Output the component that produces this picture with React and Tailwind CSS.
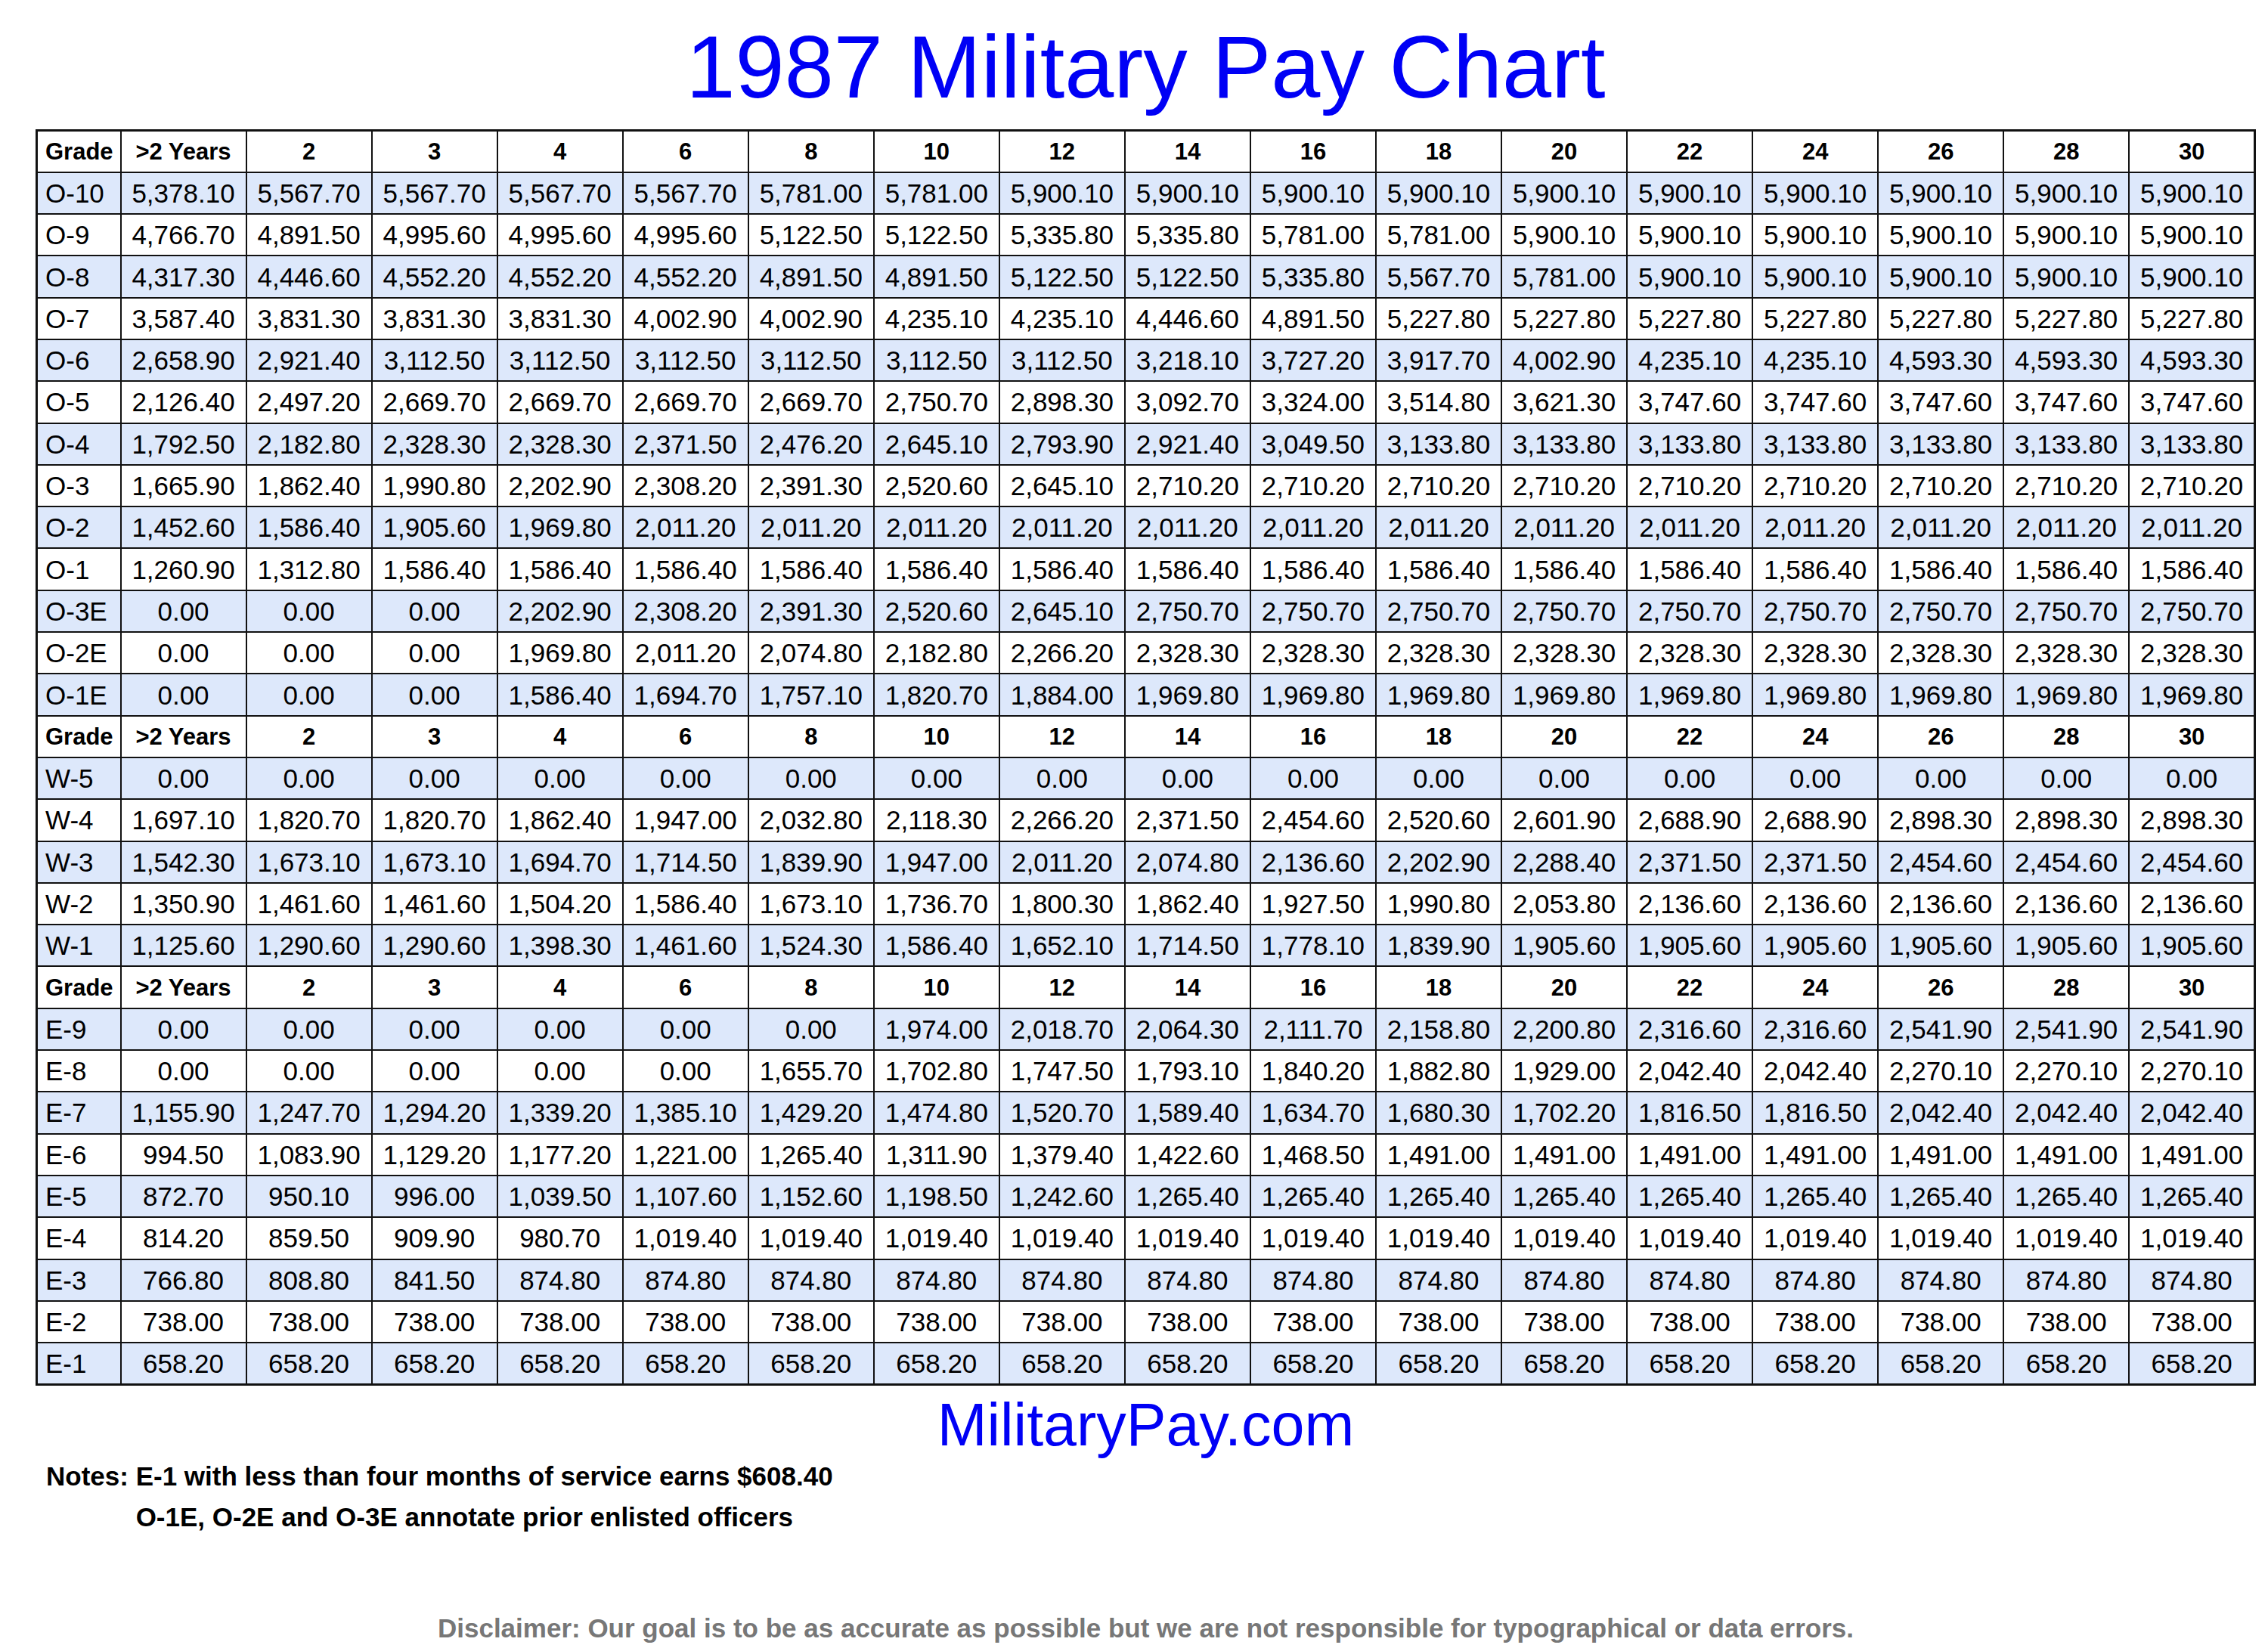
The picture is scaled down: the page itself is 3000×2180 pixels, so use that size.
const rep = (v, n) => Array(n).fill(v);

const years = [">2 Years", "2", "3", "4", "6", "8", "10", "12", "14", "16", "18", "20", "22", "24", "26", "28", "30"];

const officers = [
  ["O-10", ["5,378.10", "5,567.70", "5,567.70", "5,567.70", "5,567.70", "5,781.00", "5,781.00", ...rep("5,900.10", 10)]],
  ["O-9", ["4,766.70", "4,891.50", "4,995.60", "4,995.60", "4,995.60", "5,122.50", "5,122.50", "5,335.80", "5,335.80", "5,781.00", "5,781.00", ...rep("5,900.10", 6)]],
  ["O-8", ["4,317.30", "4,446.60", "4,552.20", "4,552.20", "4,552.20", "4,891.50", "4,891.50", "5,122.50", "5,122.50", "5,335.80", "5,567.70", "5,781.00", ...rep("5,900.10", 5)]],
  ["O-7", ["3,587.40", "3,831.30", "3,831.30", "3,831.30", "4,002.90", "4,002.90", "4,235.10", "4,235.10", "4,446.60", "4,891.50", ...rep("5,227.80", 7)]],
  ["O-6", ["2,658.90", "2,921.40", ...rep("3,112.50", 6), "3,218.10", "3,727.20", "3,917.70", "4,002.90", "4,235.10", "4,235.10", ...rep("4,593.30", 3)]],
  ["O-5", ["2,126.40", "2,497.20", ...rep("2,669.70", 4), "2,750.70", "2,898.30", "3,092.70", "3,324.00", "3,514.80", "3,621.30", ...rep("3,747.60", 5)]],
  ["O-4", ["1,792.50", "2,182.80", "2,328.30", "2,328.30", "2,371.50", "2,476.20", "2,645.10", "2,793.90", "2,921.40", "3,049.50", ...rep("3,133.80", 7)]],
  ["O-3", ["1,665.90", "1,862.40", "1,990.80", "2,202.90", "2,308.20", "2,391.30", "2,520.60", "2,645.10", ...rep("2,710.20", 9)]],
  ["O-2", ["1,452.60", "1,586.40", "1,905.60", "1,969.80", ...rep("2,011.20", 13)]],
  ["O-1", ["1,260.90", "1,312.80", ...rep("1,586.40", 15)]],
  ["O-3E", [...rep("0.00", 3), "2,202.90", "2,308.20", "2,391.30", "2,520.60", "2,645.10", ...rep("2,750.70", 9)]],
  ["O-2E", [...rep("0.00", 3), "1,969.80", "2,011.20", "2,074.80", "2,182.80", "2,266.20", ...rep("2,328.30", 9)]],
  ["O-1E", [...rep("0.00", 3), "1,586.40", "1,694.70", "1,757.10", "1,820.70", "1,884.00", ...rep("1,969.80", 9)]],
];

const warrants = [
  ["W-5", rep("0.00", 17)],
  ["W-4", ["1,697.10", "1,820.70", "1,820.70", "1,862.40", "1,947.00", "2,032.80", "2,118.30", "2,266.20", "2,371.50", "2,454.60", "2,520.60", "2,601.90", "2,688.90", "2,688.90", ...rep("2,898.30", 3)]],
  ["W-3", ["1,542.30", "1,673.10", "1,673.10", "1,694.70", "1,714.50", "1,839.90", "1,947.00", "2,011.20", "2,074.80", "2,136.60", "2,202.90", "2,288.40", "2,371.50", "2,371.50", ...rep("2,454.60", 3)]],
  ["W-2", ["1,350.90", "1,461.60", "1,461.60", "1,504.20", "1,586.40", "1,673.10", "1,736.70", "1,800.30", "1,862.40", "1,927.50", "1,990.80", "2,053.80", ...rep("2,136.60", 5)]],
  ["W-1", ["1,125.60", "1,290.60", "1,290.60", "1,398.30", "1,461.60", "1,524.30", "1,586.40", "1,652.10", "1,714.50", "1,778.10", "1,839.90", ...rep("1,905.60", 6)]],
];

const enlisted = [
  ["E-9", [...rep("0.00", 6), "1,974.00", "2,018.70", "2,064.30", "2,111.70", "2,158.80", "2,200.80", "2,316.60", "2,316.60", ...rep("2,541.90", 3)]],
  ["E-8", [...rep("0.00", 5), "1,655.70", "1,702.80", "1,747.50", "1,793.10", "1,840.20", "1,882.80", "1,929.00", "2,042.40", "2,042.40", ...rep("2,270.10", 3)]],
  ["E-7", ["1,155.90", "1,247.70", "1,294.20", "1,339.20", "1,385.10", "1,429.20", "1,474.80", "1,520.70", "1,589.40", "1,634.70", "1,680.30", "1,702.20", "1,816.50", "1,816.50", ...rep("2,042.40", 3)]],
  ["E-6", ["994.50", "1,083.90", "1,129.20", "1,177.20", "1,221.00", "1,265.40", "1,311.90", "1,379.40", "1,422.60", "1,468.50", ...rep("1,491.00", 7)]],
  ["E-5", ["872.70", "950.10", "996.00", "1,039.50", "1,107.60", "1,152.60", "1,198.50", "1,242.60", ...rep("1,265.40", 9)]],
  ["E-4", ["814.20", "859.50", "909.90", "980.70", ...rep("1,019.40", 13)]],
  ["E-3", ["766.80", "808.80", "841.50", ...rep("874.80", 14)]],
  ["E-2", rep("738.00", 17)],
  ["E-1", rep("658.20", 17)],
];

const cell = "border-2 border-[#111] p-0 h-[55.3px]";

const HeaderRow = () => (
  <tr className="bg-white">
    <td className={`${cell} pl-[10px] text-left font-bold text-[31px]`}>Grade</td>
    {years.map((y, i) => (
      <td key={i} className={`${cell} text-center font-bold text-[31px]`}>{y}</td>
    ))}
  </tr>
);

const DataRows = ({ rows }) =>
  rows.map(([grade, pay], r) => (
    <tr key={grade} className={r % 2 === 0 ? "bg-[#dde8fb]" : "bg-white"}>
      <td className={`${cell} pl-[10px] text-left text-[35px]`}>{grade}</td>
      {pay.map((v, i) => (
        <td key={i} className={`${cell} text-center text-[35px]`}>{v}</td>
      ))}
    </tr>
  ));

export default function App() {
  return (
    <div className="w-[3000px] min-h-[2180px] bg-white text-black font-['Liberation_Sans',Arial,sans-serif]">
      <div className="ml-[47px] w-[2937px] pt-[30px]">
        <h1 className="text-center text-[117px] leading-none text-[#0000f5] font-normal">1987 Military Pay Chart</h1>

        <table className="mt-[24px] w-[2937px] table-fixed border-collapse border-[3px] border-[#111] leading-none">
          <colgroup>
            <col className="w-[111px]" />
          </colgroup>
          <tbody>
            <HeaderRow />
            <DataRows rows={officers} />
            <HeaderRow />
            <DataRows rows={warrants} />
            <HeaderRow />
            <DataRows rows={enlisted} />
          </tbody>
        </table>

        <p className="mt-[12px] text-center text-[79px] leading-none text-[#0000f5]">MilitaryPay.com</p>
      </div>

      <div className="ml-[61px] mt-[2px] flex text-[35px] leading-[54px] font-bold">
        <span className="whitespace-pre">Notes: </span>
        <div className="flex flex-col">
          <span>E-1 with less than four months of service earns $608.40</span>
          <span>O-1E, O-2E and O-3E annotate prior enlisted officers</span>
        </div>
      </div>

      <div className="ml-[47px] w-[2937px] mt-[102px]">
        <p className="text-center text-[35px] leading-none font-bold text-[#777777]">
          Disclaimer: Our goal is to be as accurate as possible but we are not responsible for typographical or data errors.
        </p>
      </div>
    </div>
  );
}
